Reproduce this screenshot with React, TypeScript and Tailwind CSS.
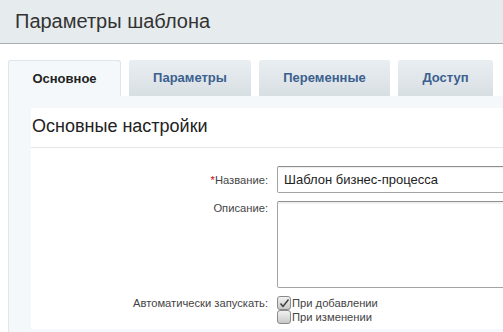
export default function App() {
  const font = { fontFamily: '"Liberation Sans", Arial, sans-serif' };
  return (
    <div
      className="w-[503px] h-[332px] overflow-hidden bg-white text-[#333]"
      style={font}
    >
      <div className="h-[44px] bg-[#e6ebee] border-b border-[#a9aeb2] flex items-center pl-[15px]">
        <h1 className="text-[20px] text-[#333] leading-none -mt-[2px]">
          Параметры шаблона
        </h1>
      </div>

      <div className="pt-[16px] pl-[8px]">
        <div className="flex gap-[8px] h-[36px] whitespace-nowrap">
          <div className="w-[113px] shrink-0 bg-[#f5f8fa] border border-b-0 border-[#dfe5e8] rounded-t-[3px] flex items-center justify-center text-[13px] font-bold text-[#222]">
            Основное
          </div>
          <div className="w-[122px] shrink-0 bg-gradient-to-b from-[#e9eef1] to-[#d8dfe3] rounded-t-[2px] flex items-center justify-center text-[13px] font-bold text-[#3b5f8f]">
            Параметры
          </div>
          <div className="w-[131px] shrink-0 bg-gradient-to-b from-[#e9eef1] to-[#d8dfe3] rounded-t-[2px] flex items-center justify-center text-[13px] font-bold text-[#3b5f8f]">
            Переменные
          </div>
          <div className="w-[95px] shrink-0 bg-gradient-to-b from-[#e9eef1] to-[#d8dfe3] rounded-t-[2px] flex items-center justify-center text-[13px] font-bold text-[#3b5f8f]">
            Доступ
          </div>
        </div>

        <div className="h-[236px] bg-[#f5f8fa] border-l border-[#e1e7ea] pl-[22px] pt-[12px]">
          <div className="bg-white h-[221px] overflow-hidden">
            <div className="h-[40px] border-b border-[#e3e7ea] pl-[1px] flex items-center">
              <h2 className="text-[18px] text-[#222] leading-none -mt-[4px]">
                Основные настройки
              </h2>
            </div>

            <div className="pt-[18px] flex flex-col gap-[8px] text-[11.2px] leading-[14px] text-[#444]">
              <div className="flex items-center">
                <div className="w-[237px] shrink-0 text-right">
                  <span className="text-[#d0021b]">*</span>Название:
                </div>
                <div className="ml-[9px] w-[240px] shrink-0 h-[27px] border border-[#a3a3a3] border-t-[#8f8f8f] rounded-[2px] flex items-center pl-[6px] text-[13px] text-[#222] shadow-[inset_0_1px_1px_rgba(0,0,0,0.08)]">
                  Шаблон бизнес-процесса
                </div>
              </div>

              <div className="flex items-start">
                <div className="w-[237px] shrink-0 text-right">
                  Описание:
                </div>
                <div className="ml-[9px] w-[240px] shrink-0 h-[87px] border border-[#a3a3a3] border-t-[#8f8f8f] rounded-[2px] shadow-[inset_0_2px_1px_rgba(0,0,0,0.06)]" />
              </div>

              <div className="flex items-start">
                <div className="w-[237px] shrink-0 text-right">
                  Автоматически запускать:
                </div>
                <div className="ml-[9px] flex flex-col">
                  <label className="flex items-center gap-[1px] h-[14px]">
                    <span className="w-[14px] h-[14px] rounded-[3px] border border-[#8a8a8a] bg-gradient-to-b from-[#f2f2f2] to-[#c9c9c9] flex items-center justify-center">
                      <svg width="11" height="11" viewBox="0 0 11 11">
                        <path
                          d="M1.5 5.5 L4 8.5 L9.5 1.5"
                          fill="none"
                          stroke="#3a3a3a"
                          strokeWidth="1.4"
                        />
                      </svg>
                    </span>
                    <span>При добавлении</span>
                  </label>
                  <label className="flex items-center gap-[1px] h-[14px]">
                    <span className="w-[14px] h-[14px] rounded-[3px] border border-[#8a8a8a] bg-gradient-to-b from-[#f2f2f2] to-[#c9c9c9]" />
                    <span>При изменении</span>
                  </label>
                </div>
              </div>
            </div>
          </div>
        </div>
      </div>
    </div>
  );
}
